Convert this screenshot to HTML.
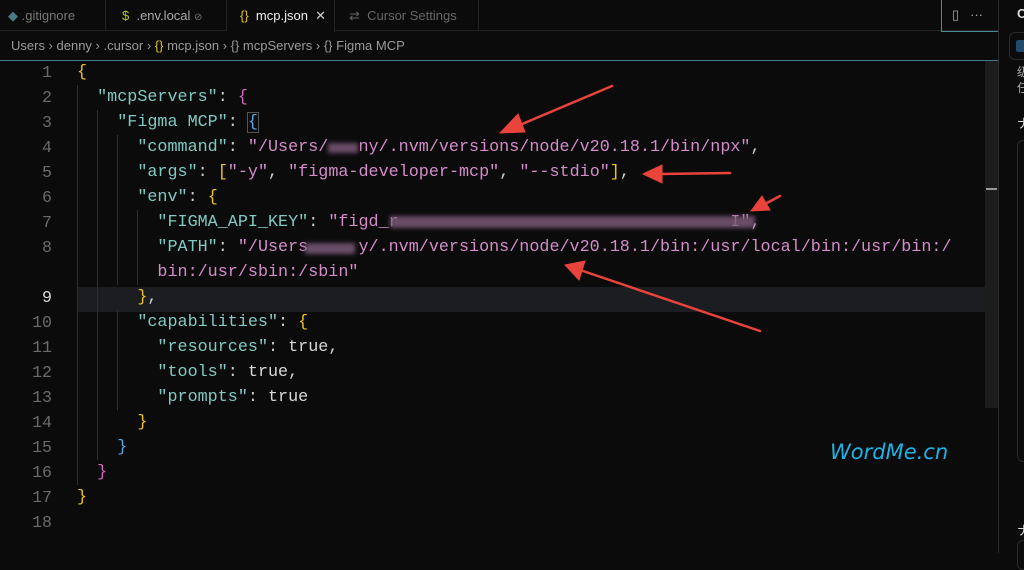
<!DOCTYPE html>
<html><head><meta charset="utf-8"><style>
*{margin:0;padding:0;box-sizing:border-box}
body{width:1024px;height:553px;background:#0b0b0b;overflow:hidden;position:relative;font-family:"Liberation Sans",sans-serif}
.abs{position:absolute}
.tabs{left:0;top:0;width:999px;height:31px;border-bottom:1px solid #222}
.tab{position:absolute;top:0;height:31px;border-right:1px solid #222;font-size:13px;color:#777;line-height:31px;white-space:nowrap}
.crumb{left:11px;top:38px;font-size:13px;color:#9a9a9a;white-space:nowrap}
.code{left:0;top:60px;width:998px;font-family:"Liberation Mono",monospace;font-size:16.75px}
.ln{position:absolute;left:0;width:52px;text-align:right;color:#6a6a6a;height:25px;line-height:25px;font-size:16.6px}
.tx{position:absolute;left:77px;height:25px;line-height:25px;white-space:pre;color:#ccc}
.k{color:#7fcac3}.s{color:#d48ccb}.y{color:#f1c21b}.m{color:#d468c4}.b{color:#5aa8e8}.w{color:#d8d8d8}
.g{position:absolute;width:1px;background:#2e2e2e}
.blur{position:absolute;background:#7a5878;filter:blur(2px);opacity:.85}
</style></head><body>
<div class="abs tabs">
 <div class="tab" style="left:0;width:106px;padding-left:8px"><span style="color:#4a7a85">◆</span> .gitignore</div>
 <div class="tab" style="left:106px;width:121px;padding-left:16px;color:#aaa"><span style="color:#b5c42b">$</span>&nbsp; .env.local <span style="font-size:10px;color:#777">⊘</span></div>
 <div class="tab" style="left:227px;width:108px;padding-left:13px;color:#eee;background:#0b0b0b;height:32px"><span style="color:#e3c11c">{}</span>&nbsp; mcp.json&nbsp; <span style="color:#ccc">✕</span></div>
 <div class="tab" style="left:335px;width:144px;padding-left:14px;color:#666">⇄&nbsp; Cursor Settings</div>
 <div class="abs" style="left:941px;top:0;width:58px;height:32px;border-left:1px solid #4a8a90;border-bottom:1px solid #4a8a90;color:#aaa;font-size:13px;line-height:30px;padding-left:10px">▯&nbsp;&nbsp;&nbsp;···</div>
</div>
<div class="abs crumb">Users › denny › .cursor › <span style="color:#e3c11c">{}</span> mcp.json › {} mcpServers › {} Figma MCP</div>
<div class="abs" style="left:0;top:60px;width:998px;height:1px;background:#3f7d86"></div>
<div class="abs" style="left:77px;top:287px;width:908px;height:25px;background:#1b1d20"></div>
<div class="abs" style="left:985px;top:61px;width:13px;height:347px;background:#1c1c1c"></div>
<div class="abs" style="left:986px;top:188px;width:11px;height:2px;background:#999"></div>
<div class="abs" style="left:998px;top:0;width:1px;height:553px;background:#2a2a2a"></div>
<div class="abs" style="left:1017px;top:6px;color:#ddd;font-size:13px;font-weight:bold">C</div>
<div class="abs" style="left:1009px;top:32px;width:30px;height:28px;border:1px solid #2a2a2a;border-radius:6px"></div>
<div class="abs" style="left:1016px;top:40px;width:10px;height:12px;background:#23496b;border-radius:2px"></div>
<div class="abs" style="left:1017px;top:64px;color:#aaa;font-size:12px;line-height:16px;font-family:'Noto Sans CJK SC',sans-serif">级<br>任</div>
<div class="abs" style="left:1017px;top:113px;color:#ddd;font-size:13px;font-family:'Noto Sans CJK SC',sans-serif">ナ</div>
<div class="abs" style="left:1017px;top:140px;width:20px;height:322px;border:1px solid #2a2a2a;border-radius:6px"></div>
<div class="abs" style="left:1017px;top:520px;color:#ddd;font-size:13px;font-family:'Noto Sans CJK SC',sans-serif">ナ</div>
<div class="abs" style="left:1017px;top:540px;width:20px;height:30px;border:1px solid #2a2a2a;border-radius:6px"></div>

<div class="abs code">
<div class="g" style="left:77px;top:25px;height:400px"></div>
<div class="g" style="left:97px;top:50px;height:350px"></div>
<div class="g" style="left:117px;top:75px;height:150px"></div>
<div class="g" style="left:117px;top:250px;height:100px"></div>
<div class="g" style="left:137px;top:150px;height:75px"></div>

<div class="ln" style="top:0">1</div><div class="tx" style="top:0"><span class="y">{</span></div>
<div class="ln" style="top:25px">2</div><div class="tx" style="top:25px">  <span class="k">"mcpServers"</span>: <span class="m">{</span></div>
<div class="ln" style="top:50px">3</div><div class="tx" style="top:50px">    <span class="k">"Figma MCP"</span>: <span class="b" style="outline:1px solid #555">{</span></div>
<div class="ln" style="top:75px">4</div><div class="tx" style="top:75px">      <span class="k">"command"</span>: <span class="s">"/Users/   ny/.nvm/versions/node/v20.18.1/bin/npx"</span>,</div>
<div class="ln" style="top:100px">5</div><div class="tx" style="top:100px">      <span class="k">"args"</span>: <span class="y">[</span><span class="s">"-y"</span>, <span class="s">"figma-developer-mcp"</span>, <span class="s">"--stdio"</span><span class="y">]</span>,</div>
<div class="ln" style="top:125px">6</div><div class="tx" style="top:125px">      <span class="k">"env"</span>: <span class="y">{</span></div>
<div class="ln" style="top:150px">7</div><div class="tx" style="top:150px">        <span class="k">"FIGMA_API_KEY"</span>: <span class="s">"figd_r                                 I"</span>,</div>
<div class="ln" style="top:175px">8</div><div class="tx" style="top:175px">        <span class="k">"PATH"</span>: <span class="s">"/Users     y/.nvm/versions/node/v20.18.1/bin:/usr/local/bin:/usr/bin:/</span></div>
<div class="tx" style="top:200px">        <span class="s">bin:/usr/sbin:/sbin"</span></div>
<div class="ln" style="top:225px;color:#ddd">9</div><div class="tx" style="top:225px">      <span class="y">}</span>,</div>
<div class="ln" style="top:250px">10</div><div class="tx" style="top:250px">      <span class="k">"capabilities"</span>: <span class="y">{</span></div>
<div class="ln" style="top:275px">11</div><div class="tx" style="top:275px">        <span class="k">"resources"</span>: <span class="w">true</span>,</div>
<div class="ln" style="top:300px">12</div><div class="tx" style="top:300px">        <span class="k">"tools"</span>: <span class="w">true</span>,</div>
<div class="ln" style="top:325px">13</div><div class="tx" style="top:325px">        <span class="k">"prompts"</span>: <span class="w">true</span></div>
<div class="ln" style="top:350px">14</div><div class="tx" style="top:350px">      <span class="y">}</span></div>
<div class="ln" style="top:375px">15</div><div class="tx" style="top:375px">    <span class="b">}</span></div>
<div class="ln" style="top:400px">16</div><div class="tx" style="top:400px">  <span class="m">}</span></div>
<div class="ln" style="top:425px">17</div><div class="tx" style="top:425px"><span class="y">}</span></div>
<div class="ln" style="top:450px">18</div>
</div>
<div class="blur" style="left:328px;top:143px;width:30px;height:10px"></div>
<div class="blur" style="left:390px;top:216px;width:365px;height:12px"></div>
<div class="blur" style="left:305px;top:243px;width:50px;height:11px"></div>

<div class="abs" style="left:830px;top:440px;font-size:21px;font-style:italic;color:#1ab4e6;font-family:'DejaVu Sans',sans-serif">WordMe.cn</div>

<svg class="abs" style="left:0;top:0" width="1024" height="553">
<g fill="#e8443c" stroke="#e8443c" stroke-linecap="round">
<line x1="612" y1="86" x2="515" y2="127" stroke-width="2.5"/>
<polygon points="500,133 518,114 525,132" />
<line x1="730" y1="173" x2="660" y2="174" stroke-width="2.5"/>
<polygon points="643,174 662,165 662,183"/>
<line x1="780" y1="196" x2="765" y2="204" stroke-width="2.5"/>
<polygon points="751,211 762,196 770,210"/>
<line x1="760" y1="331" x2="580" y2="270" stroke-width="2.5"/>
<polygon points="565,265 585,261 579,280"/>
</g>
</svg>
</body></html>
